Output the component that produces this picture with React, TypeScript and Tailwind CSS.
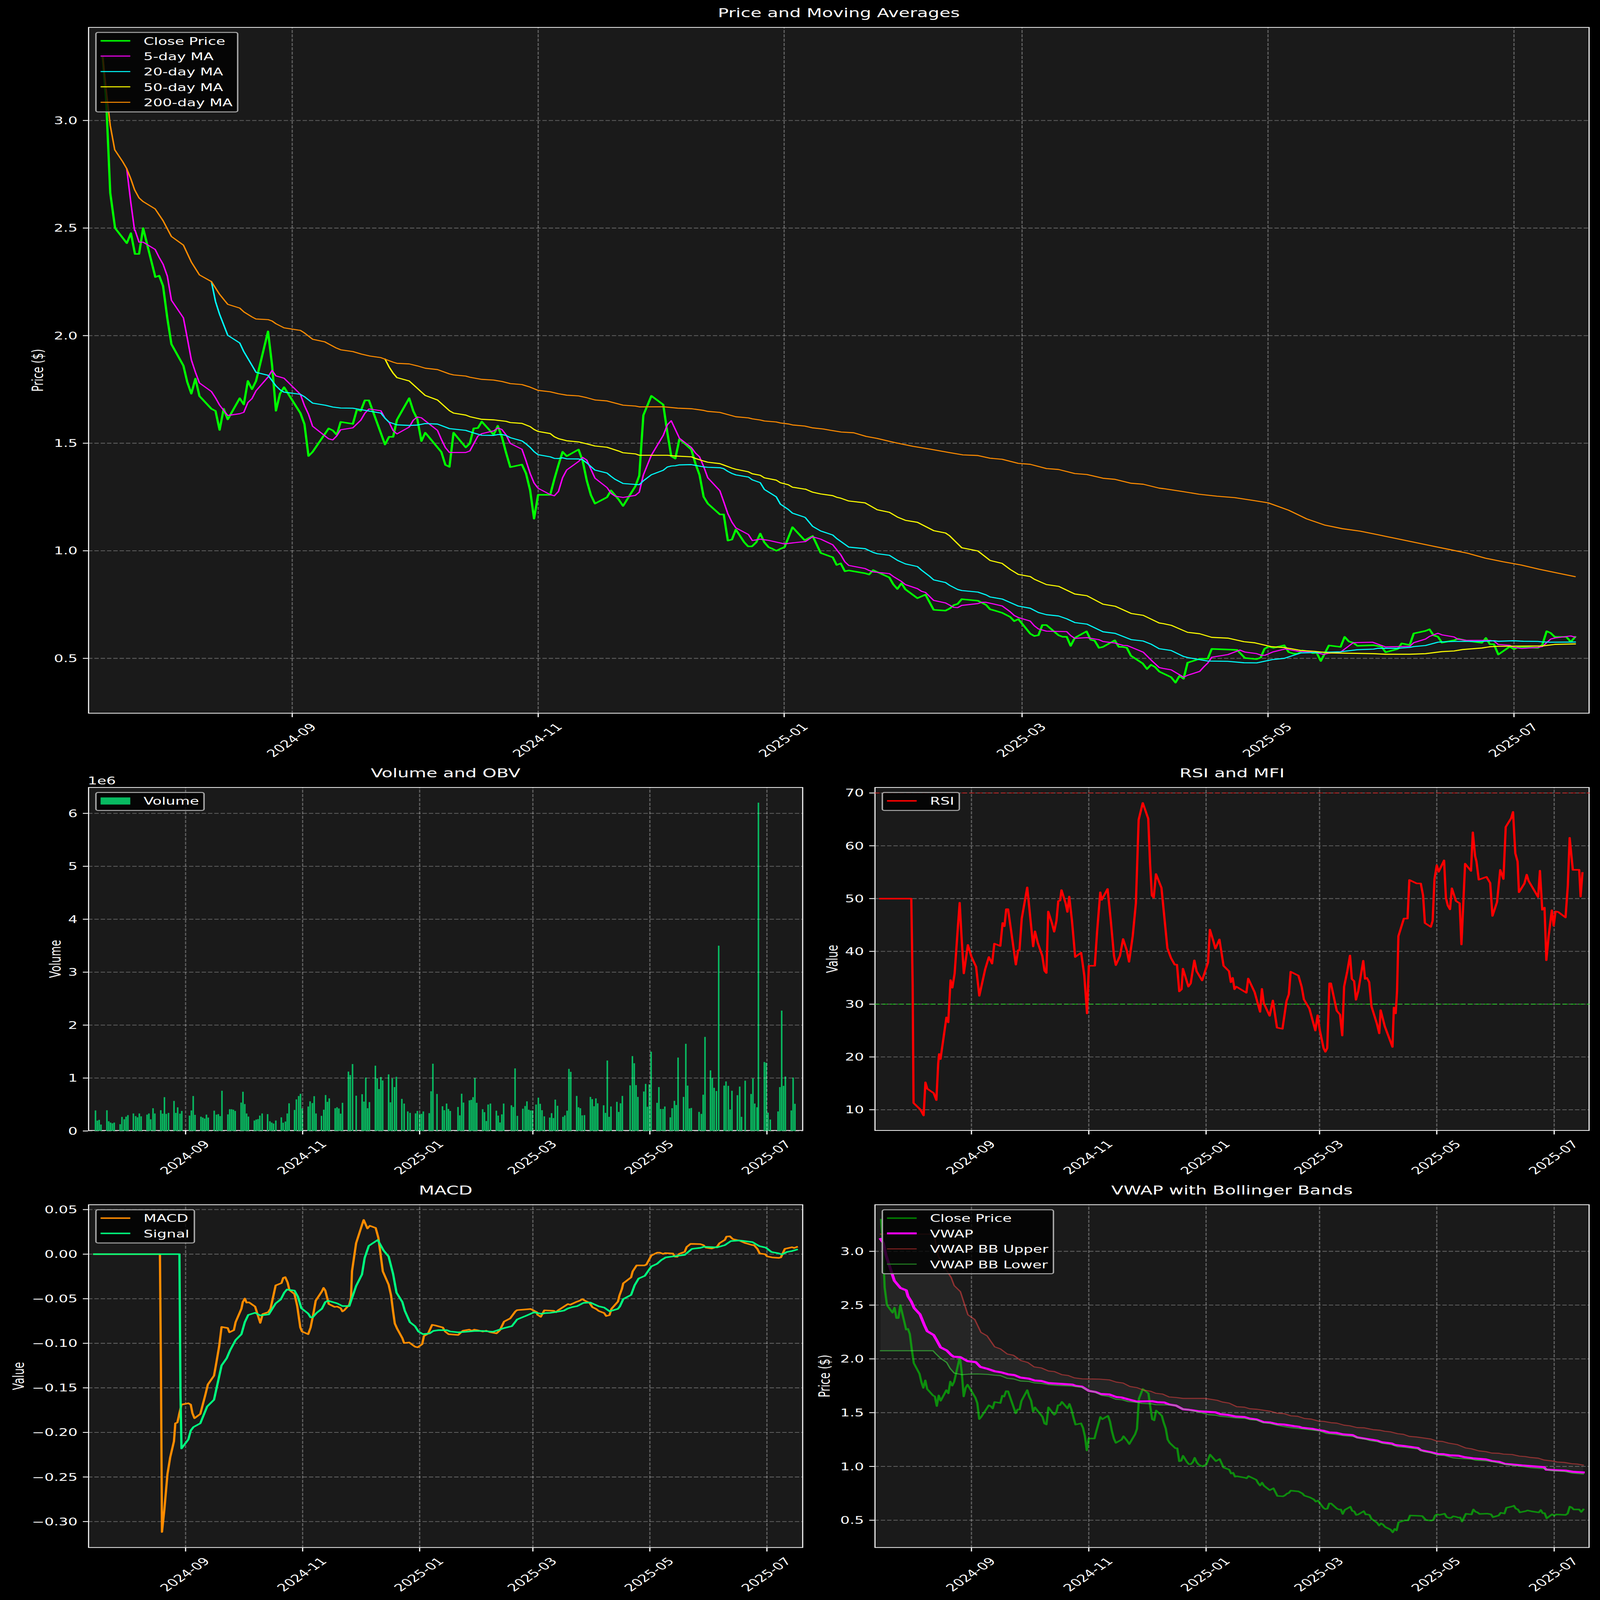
import React from "react";

type Pt = [number, number];
const parse = (s: string, ox: number, oy: number, sx: number, sy: number): Pt[] =>
  s.trim().split(/\s+/).map((t) => {
    const [a, b] = t.split(",").map(Number);
    return [ox + a / sx, oy + b / sy] as Pt;
  });
const Z1 = (s: string) => parse(s, 0, 0, 1.0453, 1.568);
const Z3 = (s: string) => parse(s, 2200, 4800, 1.0453, 1.568);
const Z4 = (s: string) => parse(s, 3000, 2400, 1.0667, 1.568);
const Z5 = (s: string) => parse(s, 0, 4800, 1.0453, 0.9186);
const Z6 = (s: string) => parse(s, 280, 800, 1.4933, 1.2544);
const Z7 = (s: string) => parse(s, 1300, 1300, 1.568, 1.7422);
const Z8 = (s: string) => parse(s, 2250, 1850, 1.568, 1.568);
const Z9 = (s: string) => parse(s, 2440, 3200, 0.784, 1.12);
const Z11 = (s: string) => parse(s, 1400, 4880, 1.823, 1.96);
const Z12 = (s: string) => parse(s, 3200, 5000, 1.2346, 1.2062);
const P = (s: string) => parse(s, 0, 0, 1, 1);
const d = (pts: Pt[]) => "M" + pts.map((p) => `${p[0].toFixed(1)} ${p[1].toFixed(1)}`).join("L");

const close: Pt[] = [
  ...Z1("300,365 310,640 322,1230"),
  ...Z6("62,160 111,237 128,186 145,292 162,292 179,160 196,245 230,410 246,403 262,455 280,620 297,752 347,862 363,945 380,1005 397,928 414,1017 464,1082 481,1093 498,1190 515,1082 532,1136 582,1028 599,1060 616,940 633,982 650,940 700,687 717,860 733,1092 750,1005 767,972 835,1104 852,1160 869,1323 886,1302 953,1182 970,1192 987,1215 1003,1149 1054,1159 1071,1085 1087,1093 1104,1039 1121,1039 1188,1264 1205,1225 1222,1225 1238,1138 1289,1028 1306,1093 1323,1135 1340,1247 1356,1204 1423,1302 1440,1368 1457,1378 1474,1204 1525,1279 1542,1258 1558,1182"),
  ...Z7("55,768 72,722 124,815 142,752 160,830 178,940 197,1045 248,1027 266,1090 284,1210 301,1410 319,1241 372,1241 390,1130 408,1030 426,936 444,967 496,920 514,1000 532,1140 550,1243 568,1303 621,1258 638,1210 672,1275 691,1320 745,1180 762,1105 780,677 797,610 815,540 867,602 885,800 902,968 920,984 938,845 990,920 1008,1020 1026,1100 1044,1255 1062,1303 1115,1380 1132,1380 1150,1565 1168,1558 1185,1487"),
  ...P("2079,2205 2090,2222 2101,2222 2113,2205 2124,2170 2135,2205 2147,2225 2158,2232 2169,2240 2180,2232 2192,2225 2214,2144 2248,2197"),
  ...Z8("32,517 67,625 120,653 137,702 155,692 173,742 190,737 262,755 279,763 297,735 368,782 385,825 403,855 421,818 438,857 491,914 526,891 562,988 614,993 632,980 650,958 667,950 685,920 756,930 792,957 809,984 862,1007 897,1033 915,1060 933,1047 985,1140 1003,1155 1021,1150 1038,1085 1056,1085 1109,1150 1127,1160 1145,1160 1162,1218 1180,1167"),
  ...Z4("38,263 50,316 62,322 75,368 87,362 122,320 134,362 146,362 158,368 170,418 205,467 218,503 230,476 242,490 255,520 290,555 303,590 315,547 327,565 339,463 375,438 399,437 411,375 472,380 487,382 510,433 545,440 557,430 568,375 580,360 595,368 627,352 640,395 655,405 668,405 680,385 700,392 712,402 724,400 736,452 760,353 795,362 807,298 820,328 832,335 845,355 893,351 917,360 929,396 965,375 977,340 1001,350 1013,276 1048,260 1060,250 1072,288 1085,297 1097,335 1133,320 1145,310 1170,322 1216,336 1228,305 1240,345 1252,345 1265,411 1299,360 1312,377 1325,362 1383,368 1396,350 1409,262 1421,273 1433,298 1468,298 1481,330 1494,298"),
];

const ma5: Pt[] = [
  ...Z1("370,1075 382,1290 393,1470"),
  ...Z6("145,170 162,232 179,232 229,269 246,310 262,344 280,405 297,528 347,618 363,720 380,832 397,895 414,950 464,994 481,1026 498,1063 532,1116 582,1107 599,1100 616,1050 633,1030 650,990 700,920 717,886 733,914 767,926 835,1008 852,1065 869,1110 886,1171 953,1235 970,1241 987,1220 1003,1189 1054,1179 1087,1140 1104,1105 1121,1083 1171,1092 1188,1130 1205,1150 1222,1193 1238,1210 1289,1175 1306,1140 1323,1124 1340,1128 1407,1192 1423,1237 1440,1280 1457,1305 1525,1305 1542,1297"),
  ...Z7("55,825 72,808 124,788 142,767 160,778 178,815 197,877 248,918 266,1000 284,1090 301,1157 319,1195 372,1240 390,1248 408,1217 426,1120 444,1065 496,1005 514,976 532,995 568,1123 621,1190 638,1230 655,1250 691,1260 745,1245 762,1222 780,1100 815,960 867,820 885,745 902,716 938,840 990,905 1008,945 1026,972 1044,1040 1062,1120 1115,1212 1132,1290 1150,1375 1168,1435 1185,1475 1240,1522 1257,1565 1292,1555"),
  ...P("2148,2198 2170,2205 2192,2212 2214,2208 2232,2205"),
  ...Z8("0,553 32,522 67,537 120,573 155,637 173,682 190,705 262,725 279,737 297,746 368,757 385,775 421,807 438,827 491,853 509,870 526,877 562,928 614,944 650,972 667,974 685,960 756,948 774,940 792,940 862,963 897,1000 915,1024 933,1037 985,1060 1003,1090 1021,1110 1056,1124 1145,1127 1162,1152 1180,1170 1233,1165 1285,1178 1304,1190 1357,1200 1392,1215 1410,1216 1480,1258 1516,1310 1550,1356 1568,1362"),
  ...Z4("290,508 327,555 339,543 375,518 387,490 399,465 411,428 459,411 495,382 510,395 545,405 560,416 570,415 592,395 630,375 655,385 668,390 700,393 724,400 745,410 760,402 795,395 833,335 890,332 929,362 1001,358 1013,335 1048,312 1060,295 1085,275 1097,285 1133,298 1145,313 1170,320 1240,320 1252,325 1265,347 1299,352 1312,365 1335,372 1383,365 1396,360 1421,312 1433,305 1481,292 1494,300"),
];

const ma20: Pt[] = [
  ...Z6("464,433 481,535 498,600 532,707 582,746 599,790 633,860 650,896 700,911 733,965 750,985 767,997 835,1008 852,1020 886,1053 940,1064 970,1073 1003,1078 1054,1079 1171,1104 1188,1130 1205,1150 1238,1164 1290,1167 1323,1165 1356,1157 1407,1160 1457,1183 1525,1192"),
  ...Z7("37,803 72,819 124,820 142,814 160,814 178,820 197,836 248,859 266,880 284,905 301,935 319,957 372,972 390,983 408,984 426,979 444,986 496,987 514,993 532,1015 568,1066 621,1087 638,1110 655,1130 691,1161 745,1168 762,1169 780,1142 815,1099 867,1067 885,1044 902,1037 920,1035 938,1029 990,1027 1044,1043 1062,1046 1115,1049 1132,1056 1150,1075 1168,1090 1185,1100 1240,1115 1257,1135 1292,1155 1310,1203 1362,1255 1380,1307 1415,1345 1433,1371 1487,1400"),
  ...Z8("0,400 32,456 67,485 120,511 137,533 190,588 262,598 297,622 315,630 368,640 403,672 438,695 491,712 509,735 545,775 562,797 614,814 632,832 667,858 685,865 756,875 792,893 809,906 862,919 933,964 985,978 1021,1005 1056,1019 1109,1027 1145,1045 1180,1069 1233,1079 1304,1128 1357,1138 1427,1178 1480,1187 1516,1208 1550,1236 1568,1240"),
  ...Z4("290,385 327,423 339,430 399,452 459,454 507,463 545,464 592,443 627,435 677,400 735,397 795,393 845,380 893,376 905,371 965,371 1001,365 1013,360 1048,353 1085,332 1097,330 1133,327 1216,327 1252,323 1265,326 1310,323 1340,326 1383,327 1396,330 1421,332 1494,331"),
];

const ma50: Pt[] = [
  ...Z6("1188,828 1205,868 1222,900 1238,923 1289,940 1356,1014 1407,1037 1457,1092 1474,1104 1525,1114 1542,1122"),
  ...Z7("72,706 124,710 178,720 197,729 248,735 284,758 301,778 319,792 372,807 390,830 408,843 444,858 496,866 532,880 568,895 621,904 672,931 691,943 745,951 762,961 885,961 920,966 990,972 1008,983 1044,1002 1062,1010 1115,1020 1132,1030 1168,1052 1185,1060 1240,1078 1257,1092 1292,1103 1310,1121 1362,1137 1380,1155 1415,1170 1433,1187 1487,1201"),
  ...Z8("0,218 32,238 67,249 120,260 137,270 155,276 190,294 262,306 315,350 368,366 403,396 438,417 491,430 562,483 614,498 632,516 685,592 756,613 809,673 862,692 897,730 933,762 985,776 1003,793 1056,827 1109,838 1180,887 1233,898 1304,952 1357,965 1427,1011 1480,1023 1550,1072 1568,1076"),
  ...Z4("290,224 339,269 375,278 411,301 459,306 507,329 540,336 590,361 627,366 677,385 715,390 760,400 893,405 929,409 1001,409 1048,405 1097,392 1133,388 1158,379 1216,369 1240,361 1265,358 1396,356 1433,346 1494,343"),
];

const ma200: Pt[] = [
  ...Z1("300,365 312,610 322,800 335,955 358,1030 370,1075 382,1140 393,1210 406,1262"),
  ...Z6("179,25 229,62 262,122 297,203 347,247 380,333 414,399 464,433 498,498 532,549 582,568 600,588 633,613 650,624 700,627 717,634 733,648 767,669 835,682 852,695 886,727 936,740 985,772 1003,781 1054,790 1090,803 1125,813 1171,821 1222,844 1238,850 1289,853 1323,863 1356,875 1407,882 1457,904 1474,909 1525,915 1542,921"),
  ...Z7("72,423 124,428 160,438 197,453 248,460 284,478 319,501 372,511 408,525 444,535 496,540 532,553 568,569 621,576 691,606 745,612 762,618 867,617 930,627 990,631 1044,643 1062,650 1115,657 1185,688 1240,696 1257,703 1292,711 1310,718 1362,725 1380,732 1415,739 1433,746 1487,754 1522,767 1568,775"),
  ...P("2320,1750 2350,1757 2385,1760 2420,1775 2450,1783 2500,1800 2550,1815 2600,1827 2650,1840"),
  ...Z8("690,0 756,4 809,21 862,28 933,54 985,60 1056,87 1109,93 1180,119 1233,125 1304,149 1357,156 1427,181 1480,187 1550,212 1568,215"),
  ...P("3300,1998 3350,2010 3400,2018 3450,2024 3500,2035 3543,2045 3600,2075 3650,2110 3700,2135 3750,2150 3800,2160 3850,2175 3900,2190 3950,2205 4000,2220 4050,2235 4100,2250 4150,2270 4200,2285 4250,2298 4300,2315 4350,2330 4400,2345"),
];

const closeV: Pt[] = close.map((p) => [2714 + (p[0] - 816.4) * (5.373 / 11.265), 5089 + ((p[1] - 490) / 875) * 437.4]);

const vwap: Pt[] = [
  ...Z3("272,375 280,400 288,480 300,560 312,640 330,687 347,702 352,740 362,775 370,815 387,855 400,925 408,962 427,987 437,1025 447,1065 465,1085 477,1112 485,1125 505,1128 525,1153 550,1160 563,1190 585,1203 605,1218 625,1225 645,1238 662,1242 680,1258 705,1265 722,1277 742,1280 762,1293 832,1303 842,1311 860,1316 880,1343 900,1350 915,1363 940,1366 960,1382 975,1385 1000,1400 1020,1411 1065,1409 1080,1415 1100,1417 1115,1430 1135,1437 1155,1460 1170,1463 1200,1473 1250,1480 1265,1492 1285,1496 1310,1507 1335,1510 1350,1520 1370,1525 1390,1542 1410,1545 1430,1555 1450,1558 1480,1568"),
  ...Z12("530,968 540,973 575,978 600,985 615,988 635,996 660,998 680,1005 715,1009 730,1020 760,1027 800,1036 815,1044 850,1050 860,1057 895,1063 940,1072 950,1083 985,1093 1010,1102 1030,1103 1050,1108 1080,1110 1100,1117 1130,1123 1175,1128 1195,1136 1220,1140 1240,1150 1265,1153 1300,1158 1375,1166 1382,1178 1410,1181 1450,1183 1475,1189 1510,1192"),
];
const upper: Pt[] = [
  ...Z3("272,343 428,343 440,480 460,560 478,620 487,672 505,710 527,858 547,888 565,970 583,992 605,1062 622,1075 642,1108 660,1116 682,1150 702,1162 720,1190 742,1197 762,1216 780,1220 802,1240 820,1245 838,1260 860,1266 910,1268 940,1273 960,1287 980,1293 1000,1315 1020,1322 1040,1338 1060,1345 1075,1358 1095,1363 1115,1382 1135,1385 1155,1391 1220,1391 1255,1403 1270,1414 1290,1421 1312,1444 1335,1447 1350,1457 1370,1460 1410,1473 1430,1485 1450,1488 1470,1502 1490,1505 1510,1519 1530,1523 1550,1535 1568,1538"),
  ...Z12("617,942 640,948 660,950 685,960 705,963 730,972 755,973 785,982 810,985 825,990 845,993 870,1002 890,1005 910,1015 935,1018 985,1028 1005,1038 1025,1040 1045,1048 1075,1055 1105,1072 1125,1076 1150,1086 1175,1090 1195,1097 1220,1098 1235,1102 1265,1104 1290,1112 1310,1114 1325,1118 1355,1122 1375,1131 1405,1136 1420,1141 1445,1143 1470,1149 1490,1151 1510,1156"),
];
const lower: Pt[] = [
  ...Z3("272,1087 425,1087 435,1110 447,1135 465,1162 475,1200 487,1230 510,1240 530,1236 555,1235 585,1238 605,1243 622,1246 642,1263 660,1267 680,1280 705,1283 722,1292 742,1295 762,1303 790,1308 830,1312 842,1316 860,1320 880,1343 895,1347 918,1372 938,1378 958,1396 978,1400 995,1411 1020,1416 1035,1423 1065,1426 1075,1431 1125,1433 1135,1437 1155,1460 1170,1463 1200,1478 1230,1495 1250,1498 1265,1505 1285,1509 1310,1516 1335,1518 1350,1526 1370,1530 1390,1547 1410,1551 1430,1562"),
  ...Z12("475,966 500,972 540,978 575,984 600,988 625,1001 655,1005 685,1012 715,1015 735,1023 760,1029 775,1036 800,1041 820,1050 850,1056 870,1066 895,1069 940,1077 960,1090 985,1096 1010,1107 1030,1109 1060,1120 1080,1123 1125,1127 1140,1132 1175,1135 1200,1140 1240,1152 1265,1157 1300,1163 1330,1169 1375,1174 1400,1183 1445,1187 1470,1195 1510,1200"),
];

const rsi = Z9("15,509 83,509 86,900 88,1440 103,1470 110,1497 114,1346 118,1375 132,1395 138,1427 142,1260 144,1217 147,1240 160,1050 164,1073 169,880 173,915 178,850 185,640 189,528 193,680 198,850 207,720 215,775 225,820 232,952 245,830 253,775 260,805 265,714 278,725 283,620 287,635 291,557 295,557 308,750 312,810 317,744 320,744 325,600 337,458 342,560 350,727 354,658 360,710 370,770 375,838 379,848 383,568 391,620 396,660 401,610 405,520 409,518 412,470 421,530 425,570 429,500 435,610 442,775 455,755 462,860 468,1032 472,815 485,815 490,660 497,480 500,515 513,465 520,610 527,770 531,812 540,770 547,693 555,745 560,797 568,680 575,530 581,150 590,73 602,145 606,350 610,495 614,505 619,397 631,460 640,650 644,735 652,780 660,810 665,810 670,932 675,922 678,828 690,910 695,895 703,790 708,840 720,882 733,800 737,650 745,705 749,737 758,695 767,815 779,840 783,890 787,870 791,922 795,910 817,938 821,873 835,935 847,1025 851,920 855,985 868,1043 875,973 884,1097 896,1102 905,975 910,945 914,842 931,860 938,910 943,968 955,1010 968,1110 973,1040 978,1110 986,1190 990,1207 994,1190 999,895 1002,895 1015,1020 1022,1037 1027,1133 1031,910 1038,840 1044,768 1048,875 1053,885 1057,970 1062,930 1073,792 1077,875 1081,870 1086,890 1091,1000 1103,1080 1108,1123 1111,1017 1120,1090 1137,1185 1140,1005 1144,1032 1147,930 1150,680 1162,600 1170,600 1174,424 1190,440 1199,440 1204,495 1208,620 1221,638 1225,610 1229,420 1234,357 1238,387 1250,335 1254,505 1258,540 1263,558 1267,462 1276,520 1280,525 1284,530 1288,718 1296,350 1309,383 1313,207 1318,315 1321,340 1326,423 1343,410 1351,438 1356,588 1366,525 1373,378 1380,420 1385,183 1397,142 1401,114 1406,303 1411,340 1414,480 1426,440 1431,400 1435,428 1456,502 1460,382 1465,560 1470,550 1474,790 1479,680 1486,562 1490,633 1494,568 1500,570 1516,595 1521,450 1525,232 1532,378 1546,378 1549,500 1553,392");

const macd: Pt[] = [
  ...Z5("275,276 467,276 470,700 473,1314 480,1230 489,1098 497,1035 508,975 512,908 518,905 524,870 530,838 550,833 557,838 562,870 568,889 585,873 600,800 607,763 625,730 632,680 640,620 647,548 665,552 670,568 683,560 688,530 705,480 709,455 715,442 720,457 727,456 745,472 760,533 767,500 783,493 790,480 805,393 822,384 827,365 833,362 840,382 845,410 860,425 868,470 877,550 882,565 900,575 907,550 915,500 922,450 940,415 945,402 950,412 960,462 977,473 985,472 995,478 1000,490 1005,486 1020,465 1025,440 1028,340 1040,235 1050,195 1062,148 1073,180 1080,170 1097,178 1105,215 1118,340 1135,390 1142,430 1148,490 1153,535 1160,555 1175,590 1180,608 1195,606 1212,622 1220,624 1233,612 1238,582 1250,573 1262,540 1270,542 1293,550 1300,565 1310,575 1338,578 1345,570 1352,562 1370,558 1378,562 1385,558 1393,560 1410,565 1420,562 1430,567 1450,572 1460,560 1472,528 1490,516 1505,490 1510,485 1530,483 1540,482 1550,481 1568,493"),
  ...Z11("185,915 202,932 220,880 268,884 280,895 290,880 340,830 352,835 380,815 400,803 415,790 425,802 450,820 465,855 483,868 497,885 525,902 535,925 552,918 562,868 595,810 603,760 615,710 622,665 662,617 670,570 690,522 730,522 740,515 765,443 795,420 808,420 825,430 835,424 875,427 885,452 897,453 907,430 935,413 945,375 965,350 1015,352 1030,360 1043,380 1072,387 1100,373 1112,345 1140,318 1148,292 1165,290 1180,312 1215,325 1240,342 1280,360 1288,360 1305,390 1317,427 1345,433 1355,450 1380,458 1415,462 1425,458 1445,390 1482,377 1492,383 1506,375"),
];
const signal: Pt[] = [
  ...Z5("275,276 524,276 527,800 530,1002 550,968 557,935 565,922 585,908 605,845 625,820 647,692 662,665 672,635 688,597 705,575 715,530 725,503 745,495 760,505 785,501 805,460 820,445 830,420 838,408 860,412 870,435 880,478 900,498 907,512 913,512 925,495 940,480 950,455 958,450 985,460 1000,470 1020,470 1040,395 1057,352 1065,290 1077,245 1085,238 1103,223 1120,262 1135,285 1148,350 1158,420 1175,455 1182,487 1197,530 1212,545 1222,565 1235,575 1255,572 1265,563 1280,560 1305,560 1315,565 1338,568 1360,566 1385,563 1410,563 1440,566 1470,553 1495,545 1510,520 1525,512 1535,507 1560,493"),
  ...Z11("180,900 205,908 225,902 250,900 280,893 320,882 340,865 360,855 388,846 420,820 455,818 497,848 525,858 553,888 595,868 605,848 622,790 662,757 680,680 700,627 732,605 765,530 795,508 815,480 838,458 875,450 935,438 972,390 1015,382 1032,373 1100,378 1140,360 1170,328 1215,323 1280,336 1315,368 1348,380 1377,415 1412,425 1430,435 1455,415 1482,407 1506,396"),
];

const volumeRaw = "21:1248 25:1372 29:1363 33:1420 46:1246 50:1380 54:1396 58:1405 62:1396 75:1416 79:1327 84:1356 88:1324 92:1305 104:1285 109:1317 113:1332 117:1285 121:1320 134:1299 138:1285 142:1356 147:1221 151:1285 164:1245 168:1287 172:1086 176:1290 181:1278 193:1132 197:1278 201:1210 206:1287 210:1254 227:1311 231:1248 235:1072 239:1302 252:1324 256:1335 260:1347 264:1299 268:1335 281:1251 286:1299 290:1293 294:1317 298:1008 311:1296 315:1233 319:1233 323:1239 327:1254 340:1152 344:1020 348:1170 352:1285 356:1323 369:1371 373:1359 377:1353 381:1311 386:1285 398:1293 403:1380 407:1396 411:1408 416:1371 428:1332 432:1398 437:1383 441:1285 445:1161 457:1242 461:1113 466:1072 470:1045 474:1224 487:1200 491:1137 496:1158 500:1074 504:1285 516:1314 521:1239 525:1060 529:1143 533:1101 546:1221 550:1209 554:1224 558:1287 562:1155 575:774 579:816 584:682 592:1068 605:1050 609:1140 613:847 617:1221 621:1146 634:702 638:855 642:987 646:840 650:882 663:808 667:1149 671:858 676:963 680:838 692:1107 697:1164 705:1260 710:1278 722:1284 726:1254 731:1290 735:1290 739:1260 752:1281 756:1014 760:678 769:1047 781:1197 785:1245 790:1164 794:1230 798:1254 815:1206 819:1308 823:1044 827:1152 840:1125 844:1119 848:1086 852:852 856:1155 869:1233 873:1269 877:1377 881:1176 886:1164 899:1251 903:1311 907:1395 911:1296 915:1164 932:1185 936:1206 940:735 945:1314 957:1227 962:1194 966:1137 970:1239 974:1248 978:1248 986:1176 991:1092 995:1167 999:1245 1004:1320 1016:1335 1020:1281 1024:1341 1028:1116 1033:1191 1045:1326 1049:1308 1054:1251 1058:741 1062:777 1075:1071 1079:1209 1083:1221 1087:1308 1092:1305 1105:1083 1109:1110 1113:1197 1117:1101 1121:1161 1134:1185 1138:1278 1142:639 1146:1326 1150:1200 1163:1143 1167:1266 1171:1161 1175:1071 1192:942 1197:585 1201:672 1205:939 1209:1083 1222:1017 1226:924 1230:1203 1234:930 1238:531 1251:1155 1255:963 1259:1230 1264:1230 1268:1200 1280:1332 1284:1221 1289:1131 1293:1182 1297:603 1309:1083 1314:435 1318:945 1322:1224 1326:1218 1343:1266 1348:1290 1352:1056 1356:351 1368:759 1372:849 1376:972 1381:1011 1386:-762 1398:945 1402:894 1407:948 1411:1236 1415:1008 1427:1062 1432:957 1436:1326 1444:885 1457:1047 1461:857 1465:1164 1470:1209 1473:-2507 1486:657 1490:666 1494:1275 1499:1359 1516:1260 1520:963 1524:30 1528:948 1532:834 1545:1248 1549:847 1553:1167";
const bars = volumeRaw.split(" ").map((t) => {
  const [a, b] = t.split(":").map(Number);
  return { x: 240 + a / 0.784, y: 4100 + b / 3 };
});

const LEFT_X = [518.5, 845.5, 1172.4, 1488.7, 1815.6, 2142.6];
const RIGHT_X = [2714, 3041.8, 3369.5, 3686.5, 4014, 4342];
const TOP_X = [816.4, 1503.6, 2190.7, 2855.4, 3542.5, 4229.7];
const XL = ["2024-09", "2024-11", "2025-01", "2025-03", "2025-05", "2025-07"];

const priceTicks = (y0: number, k: number): [string, number][] =>
  ["3.0", "2.5", "2.0", "1.5", "1.0", "0.5"].map((l) => [l, y0 + k * (3 - parseFloat(l))]);

type LegendItem = { label: string; cls: string };

function Legend({ items }: { items: LegendItem[] }) {
  return (
    <div className="absolute left-[17px] top-[17px] flex flex-col rounded-[8px] border-[4px] border-[#a8a8a8] bg-black/80 py-[3px] pl-[11px] pr-[12px]">
      {items.map((it) => (
        <div key={it.label} className="flex h-[62.5px] items-center gap-[37px] whitespace-nowrap text-[41.67px] leading-none text-white">
          <span className={it.cls} />
          <span>{it.label}</span>
        </div>
      ))}
    </div>
  );
}

function Chart(props: {
  title: string;
  ax: number;
  ay: number;
  w: number;
  h: number;
  boxCls: string;
  span?: boolean;
  xs: number[];
  ys: [string, number][];
  ylabel: string;
  ylabelX: number;
  legend: LegendItem[];
  extra?: React.ReactNode;
  under?: React.ReactNode;
  children: React.ReactNode;
}) {
  const { ax, ay, w, h } = props;
  const bottom = ay + h;
  const right = ax + w;
  const cy = ay + h / 2;
  return (
    <div className={props.span ? "col-span-2" : ""}>
      <div className="flex h-[110px] items-end justify-center pb-[28px] text-[50px] leading-[58px] text-white">{props.title}</div>
      <div className={props.boxCls}>
        <svg className="absolute left-[-3px] top-[-3px] h-full w-full overflow-visible">
          <g transform={`translate(${-ax},${-ay})`}>
            {props.under}
            {props.xs.map((x) => (
              <path key={x} d={`M${x} ${bottom}V${ay}`} stroke="#fff" strokeOpacity={0.3} strokeWidth={3.33} strokeDasharray="12.3 5.33" fill="none" />
            ))}
            {props.ys.map(([l, y]) => (
              <path key={l} d={`M${ax} ${y}H${right}`} stroke="#fff" strokeOpacity={0.3} strokeWidth={3.33} strokeDasharray="12.3 5.33" fill="none" />
            ))}
            {props.children}
            {props.xs.map((x, i) => (
              <g key={x}>
                <path d={`M${x} ${bottom}v14.6`} stroke="#fff" strokeWidth={3.33} />
                <text transform={`translate(${x - 2.5},${bottom + 107.5}) rotate(-45)`} y={15} textAnchor="middle" fill="#fff" fontSize={41.67}>
                  {XL[i]}
                </text>
              </g>
            ))}
            {props.ys.map(([l, y]) => (
              <g key={l}>
                <path d={`M${ax} ${y}h-14.6`} stroke="#fff" strokeWidth={3.33} />
                <text x={ax - 29.2} y={y + 15} textAnchor="end" fill="#fff" fontSize={41.67}>
                  {l}
                </text>
              </g>
            ))}
            <text transform={`translate(${props.ylabelX},${cy}) rotate(-90)`} textAnchor="middle" fill="#fff" fontSize={41.67}>
              {props.ylabel}
            </text>
            {props.extra}
          </g>
        </svg>
        <Legend items={props.legend} />
      </div>
    </div>
  );
}

const L = (pts: Pt[], color: string, w: number, op = 1) => (
  <path d={d(pts)} fill="none" stroke={color} strokeWidth={w} strokeOpacity={op} strokeLinejoin="round" strokeLinecap="square" />
);

export default function App() {
  const band = d([...upper, ...[...lower].reverse()]) + "Z";
  const sx = Math.min(1, window.innerWidth / 4470);
  const sy = Math.min(1, window.innerHeight / 6507);
  return (
    <div className="h-screen w-screen overflow-hidden bg-black">
      <div
        className="h-[6507px] w-[4470px] origin-top-left bg-black pl-[246px] pr-[29px] font-['DejaVu_Sans',sans-serif]"
        style={{ transform: `scale(${sx},${sy})` }}
      >
        <div className="grid grid-cols-2 gap-x-[199px] gap-y-[189px]">
          <Chart
            span
            title="Price and Moving Averages"
            ax={246}
            ay={110}
            w={4195}
            h={2792}
            boxCls="relative h-[2792px] border-[3px] border-white bg-[#1a1a1a]"
            xs={TOP_X}
            ys={priceTicks(490, 875)}
            ylabel="Price ($)"
            ylabelX={120}
            legend={[
              { label: "Close Price", cls: "block h-[6px] w-[83px] bg-[#00ff00] mb-[5px]" },
              { label: "5-day MA", cls: "block h-[4px] w-[83px] bg-[#ff00ff] mb-[5px]" },
              { label: "20-day MA", cls: "block h-[4px] w-[83px] bg-[#00ffff] mb-[5px]" },
              { label: "50-day MA", cls: "block h-[4px] w-[83px] bg-[#ffff00] mb-[5px]" },
              { label: "200-day MA", cls: "block h-[4px] w-[83px] bg-[#ff8c00] mb-[5px]" },
            ]}
          >
            {L(close, "#00ff00", 6.25)}
            {L(ma5, "#ff00ff", 4.17)}
            {L(ma20, "#00ffff", 4.17)}
            {L(ma50, "#ffff00", 4.17)}
            {L(ma200, "#ff8c00", 4.17)}
          </Chart>

          <Chart
            title="Volume and OBV"
            ax={246}
            ay={3201}
            w={1998}
            h={1398}
            boxCls="relative h-[1398px] border-[3px] border-white bg-[#1a1a1a]"
            xs={LEFT_X}
            ys={["6", "5", "4", "3", "2", "1", "0"].map((l) => [l, 4599.6 - 215.3 * Number(l)] as [string, number])}
            ylabel="Volume"
            ylabelX={169}
            legend={[{ label: "Volume", cls: "block h-[29px] w-[83px] bg-[#08ba61] mb-[3px]" }]}
            under={bars.map((b) => (
              <rect key={b.x} x={b.x - 2.15} y={b.y} width={4.3} height={4599.6 - b.y} fill="#08ba61" />
            ))}
            extra={
              <text x={245} y={3190} fill="#fff" fontSize={41.67}>
                1e6
              </text>
            }
          >
            {null}
          </Chart>

          <Chart
            title="RSI and MFI"
            ax={2443}
            ay={3201}
            w={1998}
            h={1398}
            boxCls="relative h-[1398px] border-[3px] border-white bg-[#1a1a1a]"
            xs={RIGHT_X}
            ys={["70", "60", "50", "40", "30", "20", "10"].map((l) => [l, 3225 + ((70 - Number(l)) / 10) * 214.7] as [string, number])}
            ylabel="Value"
            ylabelX={2340}
            legend={[{ label: "RSI", cls: "block h-[6px] w-[83px] bg-[#ff0000] mb-[5px]" }]}
          >
            <path d="M2443 3225H4441" stroke="#ff0000" strokeOpacity={0.5} strokeWidth={4.17} strokeDasharray="15.4 6.7" fill="none" />
            <path d="M2443 4084H4441" stroke="#00ff00" strokeOpacity={0.5} strokeWidth={4.17} strokeDasharray="15.4 6.7" fill="none" />
            {L(rsi, "#ff0000", 6.25)}
          </Chart>

          <Chart
            title="MACD"
            ax={246}
            ay={4898}
            w={1998}
            h={1397}
            boxCls="relative h-[1397px] border-[3px] border-white bg-[#1a1a1a]"
            xs={LEFT_X}
            ys={[
              ["0.05", 0.05],
              ["0.00", 0],
              ["\u22120.05", -0.05],
              ["\u22120.10", -0.1],
              ["\u22120.15", -0.15],
              ["\u22120.20", -0.2],
              ["\u22120.25", -0.25],
              ["\u22120.30", -0.3],
            ].map(([l, v]) => [l as string, 5100.5 - (v as number) * 3625] as [string, number])}
            ylabel="Value"
            ylabelX={67}
            legend={[
              { label: "MACD", cls: "block h-[6px] w-[83px] bg-[#ff8c00] mb-[5px]" },
              { label: "Signal", cls: "block h-[6px] w-[83px] bg-[#00ff7f] mb-[5px]" },
            ]}
          >
            {L(macd, "#ff8c00", 6.25)}
            {L(signal, "#00ff7f", 6.25)}
          </Chart>

          <Chart
            title="VWAP with Bollinger Bands"
            ax={2443}
            ay={4898}
            w={1998}
            h={1397}
            boxCls="relative h-[1397px] border-[3px] border-white bg-[#1a1a1a]"
            xs={RIGHT_X}
            ys={priceTicks(5089, 437.4)}
            ylabel="Price ($)"
            ylabelX={2318}
            legend={[
              { label: "Close Price", cls: "block h-[6px] w-[83px] bg-[#008000] mb-[5px]" },
              { label: "VWAP", cls: "block h-[8px] w-[83px] bg-[#ff00ff] mb-[5px]" },
              { label: "VWAP BB Upper", cls: "block h-[4px] w-[83px] bg-[#842222] mb-[5px]" },
              { label: "VWAP BB Lower", cls: "block h-[4px] w-[83px] bg-[#228422] mb-[5px]" },
            ]}
          >
            <path d={band} fill="#fff" fillOpacity={0.05} />
            {L(closeV, "#00ff00", 6.25, 0.5)}
            {L(vwap, "#ff00ff", 8.33)}
            {L(upper, "#ff4444", 4.17, 0.5)}
            {L(lower, "#44ff44", 4.17, 0.5)}
          </Chart>
        </div>
      </div>
    </div>
  );
}
